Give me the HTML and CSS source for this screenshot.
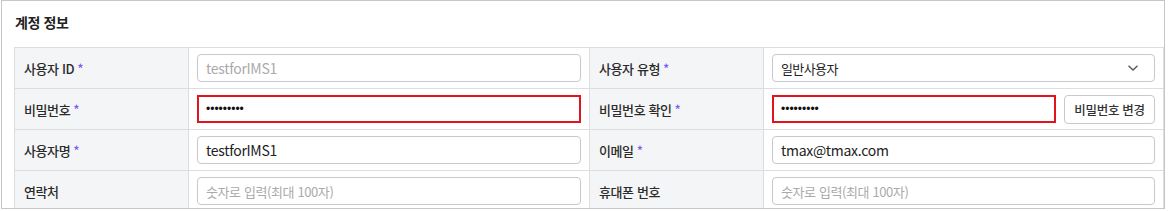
FILE: index.html
```html
<!DOCTYPE html>
<html lang="ko">
<head>
<meta charset="utf-8">
<link rel="stylesheet" href="styles.css">
</head>
<body>
<div class="panel">
  <h2 class="title">계정 정보</h2>
  <div class="grid">
    <div class="lbl">사용자 ID <span class="req">*</span></div>
    <div class="cell"><input class="inp disabled" type="text" value="testforIMS1" disabled></div>
    <div class="lbl">사용자 유형 <span class="req">*</span></div>
    <div class="cell">
      <div class="select">
        <span>일반사용자</span>
        <svg class="chev" width="12" height="8" viewBox="0 0 12 8"><path d="M1.5 1.8 L6 6 L10.5 1.8" fill="none" stroke="#555" stroke-width="1.3"/></svg>
      </div>
    </div>

    <div class="lbl">비밀번호 <span class="req">*</span></div>
    <div class="cell"><input class="inp err" type="password" value="123456789"></div>
    <div class="lbl">비밀번호 확인 <span class="req">*</span></div>
    <div class="cell row">
      <input class="inp err" type="password" value="123456789">
      <button class="btn">비밀번호 변경</button>
    </div>

    <div class="lbl">사용자명 <span class="req">*</span></div>
    <div class="cell"><input class="inp" type="text" value="testforIMS1"></div>
    <div class="lbl">이메일 <span class="req">*</span></div>
    <div class="cell"><input class="inp" type="text" value="tmax@tmax.com"></div>

    <div class="lbl">연락처</div>
    <div class="cell"><input class="inp" type="text" placeholder="숫자로 입력(최대 100자)"></div>
    <div class="lbl">휴대폰 번호</div>
    <div class="cell"><input class="inp" type="text" placeholder="숫자로 입력(최대 100자)"></div>
  </div>
</div>
</body>
</html>
```
FILE: styles.css
```css
* { box-sizing: border-box; }
html, body { margin: 0; padding: 0; background: #fff; }
body {
  font-family: "Noto Sans CJK KR", "Noto Sans", sans-serif;
  color: #333;
  font-size: 14px;
}
.panel {
  margin-left: 1px;
  width: 1164px;
  height: 209px;
  border: 1px solid #c6c6c6;
  overflow: hidden;
  padding-left: 12px;
}
.title {
  margin: 0;
  padding: 11px 0 0 1px;
  height: 46px;
  font-size: 14px;
  font-weight: 700;
  letter-spacing: -0.4px;
  line-height: 20px;
  color: #222;
}
.grid {
  display: grid;
  grid-template-columns: 174px 401px 174px 400px;
  border-top: 1px solid #dcdde0;
  border-right: 1px solid #dcdde0;
}
.lbl, .cell {
  height: 41px;
  border-left: 1px solid #dcdde0;
  border-bottom: 1px solid #dcdde0;
  display: flex;
  align-items: center;
}
.lbl {
  background: #f4f5f7;
  padding-left: 9px;
  color: #2b2b2b;
  font-size: 13px;
  font-weight: 500;
  letter-spacing: -0.4px;
}
.req { color: #7c5cf4; margin-left: 3px; font-size: 13px; }
.cell { padding: 0 8px; }
.cell.row { gap: 8px; }
.inp {
  width: 100%;
  height: 28px;
  border: 1px solid #c9c9c9;
  border-radius: 4px;
  padding: 0 8px;
  font-family: inherit;
  font-size: 14px;
  letter-spacing: -0.3px;
  color: #222;
  background: #fff;
  outline: none;
}
.inp::placeholder { color: #aaa; font-size: 13px; letter-spacing: -0.4px; }
.inp.disabled { color: #aaa; background: #fff; }
.inp.err {
  border: 2px solid #e1141e;
  border-radius: 0;
  padding-left: 7px;
  font-family: "Liberation Sans", Arial, sans-serif;
  font-size: 12px;
  letter-spacing: 0;
  color: #111;
}
.row .inp.err { width: 284px; flex: none; }
.select {
  width: 100%;
  height: 28px;
  border: 1px solid #c9c9c9;
  border-radius: 4px;
  padding: 0 15px 0 8px;
  display: flex;
  align-items: center;
  justify-content: space-between;
  color: #222;
  font-size: 13px;
  letter-spacing: -0.6px;
}
.btn {
  flex: none;
  width: 91px;
  height: 29px;
  border: 1px solid #c9c9c9;
  border-radius: 4px;
  background: #fff;
  font-family: inherit;
  font-size: 12.5px;
  font-weight: 500;
  letter-spacing: -0.3px;
  color: #333;
  padding: 0;
}
```
